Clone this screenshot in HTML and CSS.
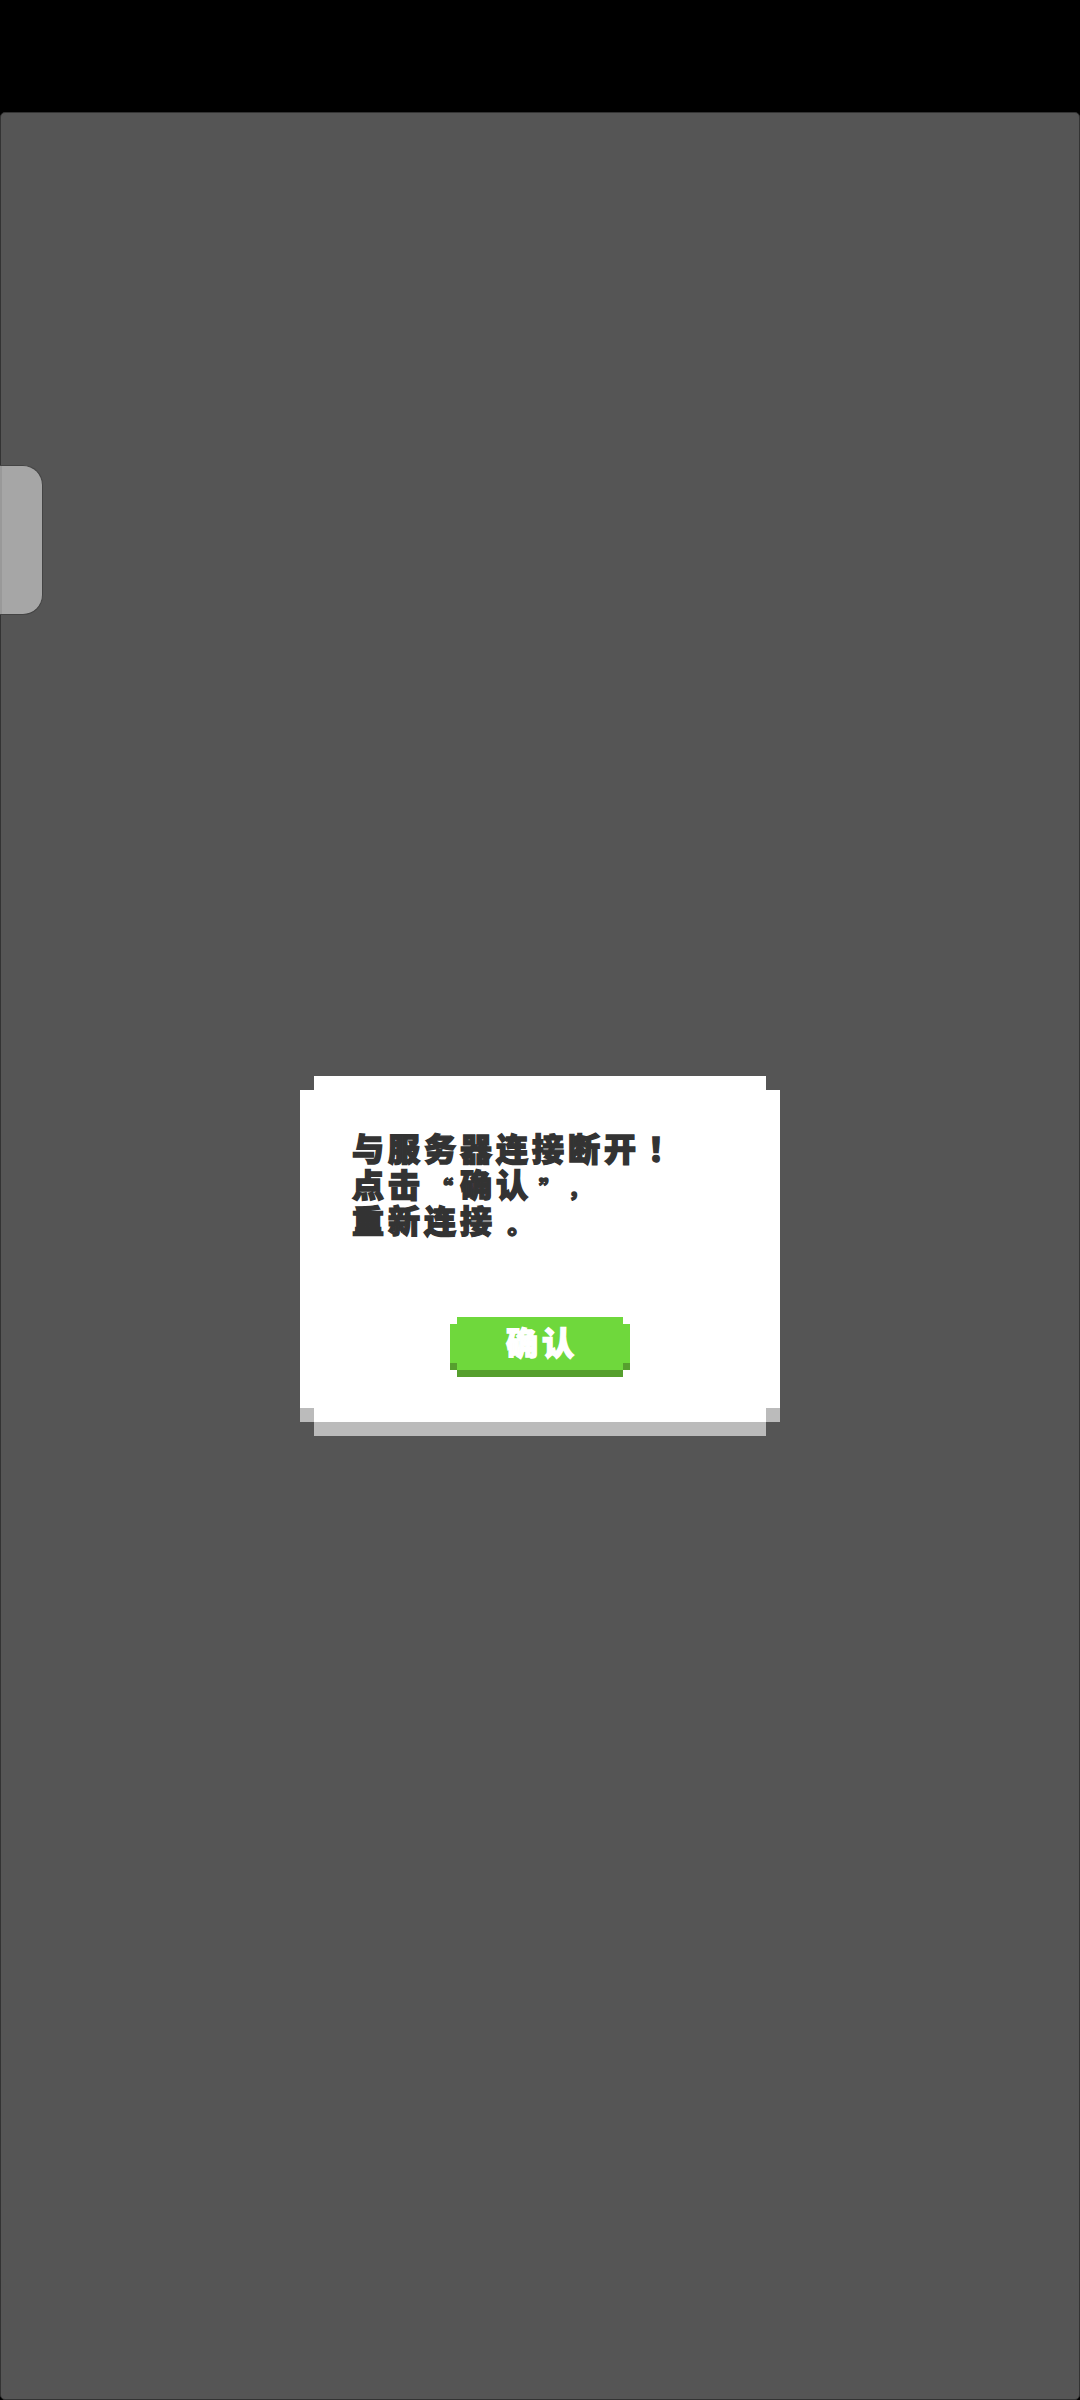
FILE: index.html
```html
<!DOCTYPE html>
<html lang="zh-CN">
<head>
    <meta charset="UTF-8">
    <meta name="viewport" content="width=device-width, initial-scale=1.0">
    <title>与服务器连接断开</title>
    <link rel="stylesheet" href="styles.css">
</head>
<body>
    <div class="status-bar"></div>
    <main class="game">
        <div class="side-handle"></div>
        <div class="dialog">
            <div class="message">
                <div class="line">与服务器连接断开<span class="punct bang">！</span></div>
                <div class="line">点击<span class="punct quote">“</span>确认<span class="punct quote">”</span><span class="punct comma">，</span></div>
                <div class="line">重新连接<span class="punct stop">。</span></div>
            </div>
            <button class="confirm-btn">确认</button>
        </div>
    </main>
</body>
</html>
```

FILE: styles.css
```css
* {
    box-sizing: border-box;
}
body {
    margin: 0;
    height: 2400px;
    display: flex;
    flex-direction: column;
    background-color: #000;
    font-family: "Noto Sans CJK SC", sans-serif;
}
.status-bar {
    height: 112px;
    background-color: #000;
}
.game {
    flex: 1;
    position: relative;
    display: flex;
    align-items: center;
    justify-content: center;
    background-color: #555;
    border: 1px solid #333;
    border-radius: 5px;
}
.side-handle {
    position: absolute;
    left: -1px;
    top: 352px;
    width: 43px;
    height: 150px;
    background-color: #a6a6a6;
    border: 1px solid #444;
    border-left: none;
    border-radius: 0 20px 20px 0;
    box-shadow: inset 2px 0 0 #999;
}
/* stepped corners: narrow centre layer over a wider side layer, grey under each */
.dialog {
    width: 480px;
    height: 360px;
    padding: 53px 52px 0;
    background:
        linear-gradient(#fff, #fff) center top / 452px 346px no-repeat,
        linear-gradient(#bbb, #bbb) center top / 452px 360px no-repeat,
        linear-gradient(#fff, #fff) left 14px / 480px 318px no-repeat,
        linear-gradient(#bbb, #bbb) left 14px / 480px 332px no-repeat;
}
.message {
    font-size: 32px;
    line-height: 36px;
    letter-spacing: 4px;
    font-weight: 900;
    color: #333;
    -webkit-text-stroke: 1.4px #333;
    white-space: nowrap;
}
.line {
    height: 36px;
}
.punct {
    display: inline-block;
    width: 36px;
    line-height: 20px;
    letter-spacing: 0;
    text-align: center;
    font-family: "Noto Sans CJK TC", sans-serif;
}
.bang {
    width: 32px;
}
.quote {
    font-size: 22px;
}
.comma {
    font-family: "Noto Sans CJK SC", sans-serif;
    font-size: 20px;
    text-align: left;
}
.stop {
    font-size: 24px;
    transform: translate(-2px, 8px);
}
.confirm-btn {
    display: block;
    width: 180px;
    height: 60px;
    margin: 80px auto 0;
    padding: 0 0 12px 4px;
    border: none;
    font-family: inherit;
    font-size: 32px;
    line-height: 36px;
    letter-spacing: 4px;
    font-weight: 900;
    color: #fff;
    -webkit-text-stroke: 1.4px #fff;
    background:
        linear-gradient(#6fd83c, #6fd83c) center top / 166px 53px no-repeat,
        linear-gradient(#569f2e, #569f2e) center top / 166px 60px no-repeat,
        linear-gradient(#6fd83c, #6fd83c) left 7px / 180px 39px no-repeat,
        linear-gradient(#569f2e, #569f2e) left 7px / 180px 46px no-repeat;
}
```
